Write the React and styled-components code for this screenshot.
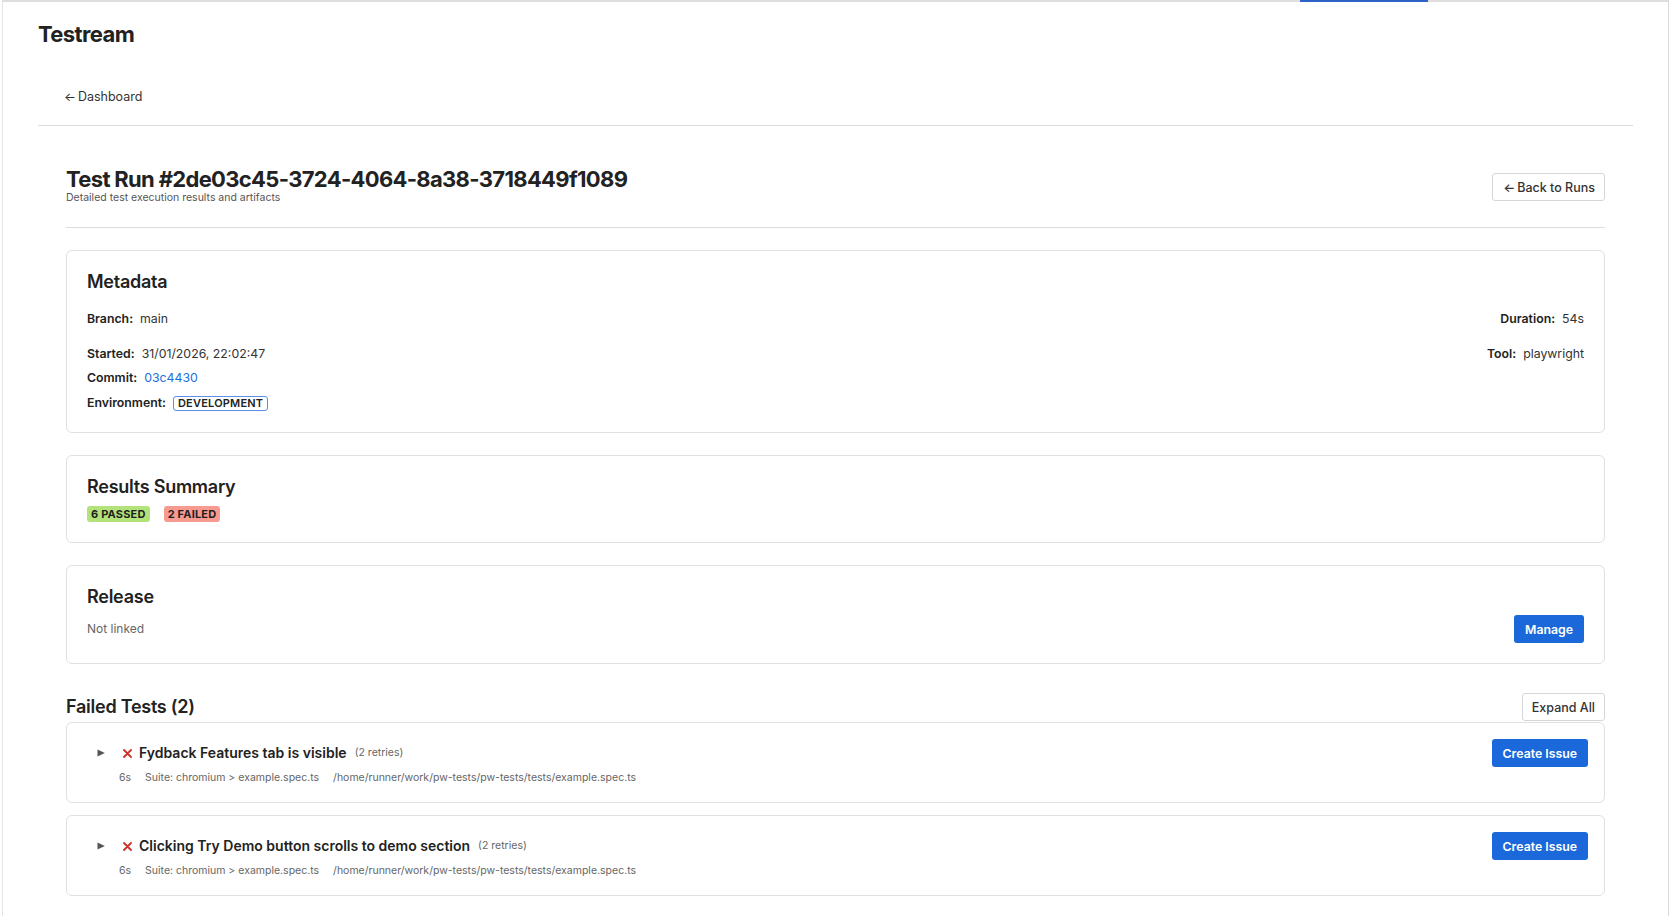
import React from "react";
import styled, { createGlobalStyle } from "styled-components";

const GlobalStyle = createGlobalStyle`
  html, body { margin: 0; padding: 0; background: #fff; }
  body {
    font-family: Inter, "Noto Sans", "Liberation Sans", sans-serif;
    color: #222;
    -webkit-font-smoothing: antialiased;
  }
  *, *::before, *::after { box-sizing: border-box; }
`;

const Frame = styled.div`
  position: relative;
  margin-left: 2px;
  width: 1667px;
  height: 916px;
  border-top: 2px solid #dedede;
  border-left: 1px solid #e4e4e4;
  border-right: 1px solid #d8d8d8;
  padding: 0 35px;
`;

const TabIndicator = styled.div`
  position: absolute;
  top: -2px;
  left: 1297px;
  width: 128px;
  height: 2px;
  background: #2d62c8;
`;

const Brand = styled.h1`
  margin: 0;
  padding-top: 18px;
  font-size: 22px;
  line-height: 28px;
  font-weight: 700;
  color: #222;
  letter-spacing: -0.6px;
`;

const TopNav = styled.nav`
  display: flex;
  padding: 41px 26px 20px;
  border-bottom: 1px solid #dcdcdc;
`;

const NavLink = styled.a`
  display: flex;
  align-items: center;
  gap: 2px;
  font-size: 12.5px;
  line-height: 16px;
  color: #333;
  text-decoration: none;
`;

const Main = styled.main`
  padding: 0 28px;
`;

const PageHeader = styled.div`
  display: flex;
  justify-content: space-between;
  align-items: center;
  padding: 41px 0 23px;
  border-bottom: 1px solid #dcdcdc;
`;

const PageTitle = styled.h2`
  margin: 0;
  font-size: 22px;
  line-height: 24px;
  font-weight: 700;
  color: #222;
  letter-spacing: -0.67px;
`;

const PageSubtitle = styled.p`
  margin: 0;
  font-size: 10.5px;
  line-height: 13px;
  color: #555;
`;

const Stack = styled.div`
  display: flex;
  flex-direction: column;
  gap: 22px;
  padding-top: 22px;
`;

const Card = styled.section`
  border: 1px solid #e0e0e0;
  border-radius: 6px;
  background: #fff;
  padding: ${(p) => (p.$compact ? "16px" : "20px")};
`;

const CardTitle = styled.h3`
  margin: 0 0 ${(p) => p.$mb || 0}px;
  font-size: 18px;
  line-height: 22px;
  font-weight: 600;
  color: #222;
  letter-spacing: -0.25px;
`;

const MetaGrid = styled.div`
  display: grid;
  grid-template-columns: 1fr auto;
  row-gap: 19px;
  align-items: start;
`;

const MetaList = styled.div`
  display: flex;
  flex-direction: column;
  gap: 8px;
  margin-top: 8px;
`;

const MetaItem = styled.div`
  display: flex;
  align-items: center;
  gap: 7px;
  font-size: 12.3px;
  line-height: 16px;
  min-height: ${(p) => (p.$tall ? 18 : 16)}px;
  justify-self: ${(p) => (p.$end ? "end" : "start")};
`;

const Label = styled.span`
  font-weight: 600;
  color: #222;
`;

const Value = styled.span`
  color: #333;
`;

const LinkValue = styled.a`
  color: #1a6fe0;
  text-decoration: none;
`;

const EnvBadge = styled.span`
  display: inline-block;
  border: 1px solid #5d8fe8;
  border-radius: 3px;
  padding: 0 4px;
  font-size: 11px;
  line-height: 13px;
  font-weight: 600;
  color: #222;
  letter-spacing: 0.2px;
`;

const BadgeRow = styled.div`
  display: flex;
  align-items: center;
  gap: 14px;
  height: 17px;
`;

const StatusBadge = styled.span`
  display: inline-block;
  padding: 0 4px;
  border-radius: 3px;
  font-size: 11px;
  line-height: 16px;
  font-weight: 700;
  letter-spacing: 0.2px;
  color: #1f1f1f;
  background: ${(p) => (p.$tone === "pass" ? "#b3e27a" : "#f79a90")};
`;

const SpreadRow = styled.div`
  display: flex;
  justify-content: space-between;
  align-items: center;
  margin-bottom: ${(p) => p.$mb || 0}px;
`;

const Muted = styled.span`
  font-size: 12px;
  line-height: 16px;
  color: #666;
`;

const PrimaryButton = styled.button`
  height: 28px;
  padding: 0 11px;
  border: none;
  border-radius: 3px;
  background: #1a68d9;
  color: #fff;
  font-family: inherit;
  font-size: 12.3px;
  font-weight: 600;
  cursor: pointer;
  margin-left: ${(p) => (p.$push ? "auto" : "0")};
`;

const OutlineButton = styled.button`
  display: inline-flex;
  align-items: center;
  gap: 2px;
  height: ${(p) => p.$h || 28}px;
  padding: 0 ${(p) => p.$pr || 9}px 0 ${(p) => p.$pl || 9}px;
  border: 1px solid #d6d6d6;
  border-radius: 3px;
  background: #fff;
  color: #333;
  font-family: inherit;
  font-size: 12.5px;
  font-weight: 500;
  cursor: pointer;
  margin-top: ${(p) => p.$mt || 0}px;
`;

const FailedSection = styled.div`
  margin-top: 7px;
`;

const TestList = styled.div`
  display: flex;
  flex-direction: column;
  gap: 12px;
`;

const TestHead = styled.div`
  display: flex;
  align-items: center;
  height: 28px;
`;

const Toggle = styled.span`
  display: inline-flex;
  margin-left: 14px;
  color: #555;
`;

const FailMark = styled.span`
  display: inline-flex;
  margin-left: 18px;
`;

const TestTitle = styled.span`
  margin-left: 7px;
  font-size: 14px;
  line-height: 18px;
  font-weight: 600;
  color: #222;
`;

const Retries = styled.span`
  margin-left: 8px;
  font-size: 10.5px;
  line-height: 14px;
  color: #666;
`;

const TestMeta = styled.div`
  display: flex;
  gap: 14px;
  margin-top: 3px;
  padding-left: 36px;
  font-size: 10.5px;
  line-height: 16px;
  color: #666;
`;

const tests = [
  { name: "Fydback Features tab is visible", retries: 2 },
  { name: "Clicking Try Demo button scrolls to demo section", retries: 2 },
];

function TriangleIcon() {
  return (
    <svg width="8" height="8" viewBox="0 0 8 8" aria-hidden="true">
      <polygon points="0.5,0.5 7.8,4 0.5,7.5" fill="currentColor" />
    </svg>
  );
}

function CrossIcon() {
  return (
    <svg width="9" height="9" viewBox="0 0 9 9" aria-hidden="true">
      <path d="M1 1 L8 8 M8 1 L1 8" stroke="#d12f2a" strokeWidth="1.8" strokeLinecap="round" />
    </svg>
  );
}

export default function App() {
  return (
    <>
      <GlobalStyle />
      <Frame>
        <TabIndicator />
        <Brand>Testream</Brand>
        <TopNav>
          <NavLink href="#">
            <span>←</span>
            <span>Dashboard</span>
          </NavLink>
        </TopNav>
        <Main>
          <PageHeader>
            <div>
              <PageTitle>Test Run #2de03c45-3724-4064-8a38-3718449f1089</PageTitle>
              <PageSubtitle>Detailed test execution results and artifacts</PageSubtitle>
            </div>
            <OutlineButton $pl={10} $pr={9} $mt={3}>
              <span>←</span>
              <span>Back to Runs</span>
            </OutlineButton>
          </PageHeader>

          <Stack>
            <Card>
              <CardTitle $mb={18}>Metadata</CardTitle>
              <MetaGrid>
                <MetaItem>
                  <Label>Branch:</Label>
                  <Value>main</Value>
                </MetaItem>
                <MetaItem $end>
                  <Label>Duration:</Label>
                  <Value>54s</Value>
                </MetaItem>
                <MetaItem>
                  <Label>Started:</Label>
                  <Value>31/01/2026, 22:02:47</Value>
                </MetaItem>
                <MetaItem $end>
                  <Label>Tool:</Label>
                  <Value>playwright</Value>
                </MetaItem>
              </MetaGrid>
              <MetaList>
                <MetaItem>
                  <Label>Commit:</Label>
                  <LinkValue href="#">03c4430</LinkValue>
                </MetaItem>
                <MetaItem $tall>
                  <Label>Environment:</Label>
                  <EnvBadge>DEVELOPMENT</EnvBadge>
                </MetaItem>
              </MetaList>
            </Card>

            <Card>
              <CardTitle $mb={7}>Results Summary</CardTitle>
              <BadgeRow>
                <StatusBadge $tone="pass">6 PASSED</StatusBadge>
                <StatusBadge $tone="fail">2 FAILED</StatusBadge>
              </BadgeRow>
            </Card>

            <Card>
              <CardTitle $mb={7}>Release</CardTitle>
              <SpreadRow>
                <Muted>Not linked</Muted>
                <PrimaryButton>Manage</PrimaryButton>
              </SpreadRow>
            </Card>

            <FailedSection>
              <SpreadRow $mb={1}>
                <CardTitle>Failed Tests (2)</CardTitle>
                <OutlineButton>Expand All</OutlineButton>
              </SpreadRow>
              <TestList>
                {tests.map((t) => (
                  <Card $compact key={t.name}>
                    <TestHead>
                      <Toggle>
                        <TriangleIcon />
                      </Toggle>
                      <FailMark>
                        <CrossIcon />
                      </FailMark>
                      <TestTitle>{t.name}</TestTitle>
                      <Retries>({t.retries} retries)</Retries>
                      <PrimaryButton $push>Create Issue</PrimaryButton>
                    </TestHead>
                    <TestMeta>
                      <span>6s</span>
                      <span>Suite: chromium &gt; example.spec.ts</span>
                      <span>/home/runner/work/pw-tests/pw-tests/tests/example.spec.ts</span>
                    </TestMeta>
                  </Card>
                ))}
              </TestList>
            </FailedSection>
          </Stack>
        </Main>
      </Frame>
    </>
  );
}
